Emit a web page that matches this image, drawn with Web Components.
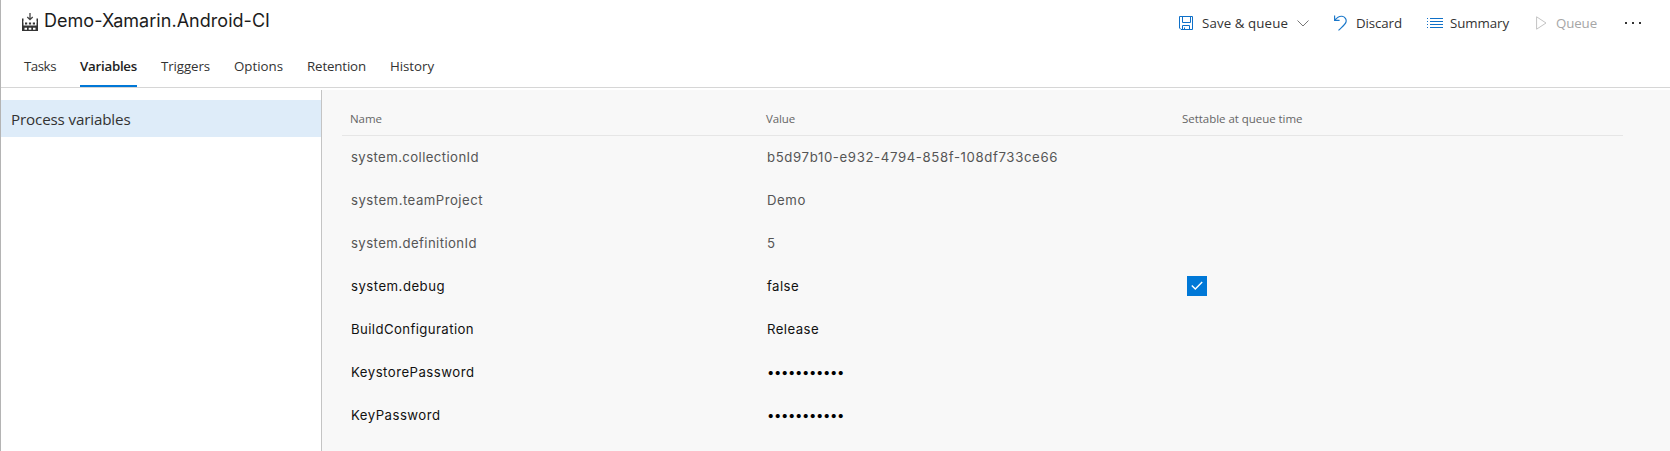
<!DOCTYPE html>
<html lang="en">
<head>
<meta charset="utf-8">
<title>Demo-Xamarin.Android-CI</title>
<style>
html,body{margin:0;height:100%;background:#fff;overflow:hidden}
body{font-family:"Open Sans","Noto Sans",sans-serif;color:#333}
</style>
</head>
<body>
<build-editor></build-editor>
<script>
const define=(name,html,setup)=>customElements.define(name,class extends HTMLElement{
  connectedCallback(){
    if(this.shadowRoot)return;
    this.attachShadow({mode:'open'}).innerHTML=html;
    if(setup)setup(this,this.shadowRoot);
  }
});

// Label whose tracking is adjusted so that it occupies the given width.
define('fit-text','<style>:host{display:block;white-space:pre;flex:none}span{display:inline-block}</style><span></span>',(el,root)=>{
  const span=root.querySelector('span'),t=el.getAttribute('text'),w=+el.getAttribute('w');
  span.textContent=t;
  el.style.width=w+'px';
  const n=span.getBoundingClientRect().width;
  span.style.letterSpacing=((w-n)/t.length).toFixed(3)+'px';
});

const icons={
  build:[16,18,'<path d="M8 0v6.5M5.3 4L8 6.7 10.700 4" fill="none" stroke="#444" stroke-width="1.3"/><path d="M0 5.500h1.500v4h13v-4H16V18H0z" fill="#333"/><path d="M1.500 8.300h13V13h-13z" fill="#fff"/><path d="M3 9.500h2.200v2H3zM6.900 9.500h2.200v2H6.900zM10.800 9.500H13v2h-2.200zM0 12.600h16v1.400H0z" fill="#333"/><path d="M2.500 14.800h2.500v2H2.500zM6.700 14.800h2.600v2H6.700zM11 14.800h2.500v2H11z" fill="#fff"/>'],
  save:[14,14,'<g fill="none" stroke="#0f70c8"><path d="M.5.500h13v13H2L.5 12z"/><path d="M3.500.500v6h8v-6M3.500 13.500v-4h7v4M5.500 13.500v-2"/></g>'],
  down:[12,7,'<path d="M.5.500L6 6 11.500.500" fill="none" stroke="#777"/>'],
  undo:[13,16,'<path d="M.6.500v4.900h5M.6 5.300C3 2.500 5.500 1 8 1.300c3 .4 4.700 3.200 4 5.700C11.300 9.500 8.500 11.500 4.500 15.400" fill="none" stroke="#1977ca" stroke-width="1.15"/>'],
  list:[16,10,'<path d="M0 .5h1M3 .5h13M0 3.500h1M3 3.500h13M0 6.500h1M3 6.500h13M0 9.500h1M3 9.500h13" stroke="#0f70c8"/>'],
  play:[11,14,'<path d="M.6.800v12.400L10 7z" fill="none" stroke="#c3c3c3"/>'],
  more:[17,2,'<path d="M0 0h2v2H0zM7 0h2v2H7zM14 0h2v2h-2z" fill="#333"/>'],
  check:[20,20,'<path fill="#0078d7" d="M0 0h20v20H0z"/><path d="M4.800 9.600L8.300 13l6.900-7" fill="none" stroke="#fff" stroke-width="1.400"/>']
};
define('ui-icon','<style>:host{display:block;flex:none}svg{display:block}</style><div></div>',(el,root)=>{
  const [w,h,p]=icons[el.getAttribute('name')];
  root.querySelector('div').innerHTML=`<svg width="${w}" height="${h}" viewBox="0 0 ${w} ${h}">${p}</svg>`;
});

define('page-title',`<style>
:host{display:flex;align-items:flex-start;color:#1c1c1c;font:18px/24px Inter,sans-serif}
ui-icon{margin:13px 6px 0 1px}fit-text{margin-top:9px}
</style><ui-icon name="build"></ui-icon><fit-text text="Demo-Xamarin.Android-CI" w="226"></fit-text>`);

define('tool-bar',`<style>
:host{display:flex;align-items:center;height:46px;font-size:13.300px;line-height:20px;color:#333}
div{display:flex;align-items:center}
.off{color:#a6a6a6}
</style>
<div style="gap:9px"><ui-icon name="save"></ui-icon><fit-text text="Save &amp; queue" w="86"></fit-text><ui-icon name="down"></ui-icon></div>
<div style="gap:9px;margin-left:25px"><ui-icon name="undo"></ui-icon><fit-text text="Discard" w="46"></fit-text></div>
<div style="gap:7px;margin-left:25px"><ui-icon name="list"></ui-icon><fit-text text="Summary" w="59"></fit-text></div>
<div class="off" style="gap:9px;margin-left:27px"><ui-icon name="play"></ui-icon><fit-text text="Queue" w="41"></fit-text></div>
<ui-icon name="more" style="margin-left:28px"></ui-icon>`);

define('tab-item',`<style>
:host{display:block;height:31px;font-size:13.300px;line-height:18px;color:#333}
:host([active]){height:28px;border-bottom:2px solid #0078d7;font-weight:600;color:#222}
</style><div></div>`,(el,root)=>{
  root.querySelector('div').innerHTML=`<fit-text text="${el.getAttribute('label')}" w="${el.getAttribute('w')}"></fit-text>`;
});

define('side-item',`<style>
:host{display:flex;align-items:center;height:37px;padding-left:10px;background:#deecf9;color:#333;font-size:15.200px}
</style><fit-text text="Process variables" w="119.500"></fit-text>`);

define('variable-row',`<style>
:host{display:grid;grid-template-columns:416px 416px 1fr;align-items:center;height:43px;padding-left:9px;font:13.200px/20px Inter,sans-serif;color:#111}
:host([readonly]){color:#555}
ui-icon{margin-left:4px}
.dots{color:#000}
</style>`,(el,root)=>{
  const a=n=>el.getAttribute(n);
  root.innerHTML+=`<fit-text text="${a('name')}" w="${a('nw')}"></fit-text><fit-text ${a('secret')!==null?'class="dots"':''} text="${a('value')}" w="${a('vw')}"></fit-text>${a('settable')!==null?'<ui-icon name="check"></ui-icon>':''}`;
});

define('variable-table',`<style>
:host{display:block;margin:10px 47px 0 20px}
header{display:grid;grid-template-columns:416px 416px 1fr;height:35px;margin-bottom:-1px;padding-left:8px;border-bottom:1px solid #e6e6e6;font-size:11.500px;line-height:37px;color:#666}
</style>
<header><fit-text text="Name" w="32"></fit-text><fit-text text="Value" w="29"></fit-text><fit-text text="Settable at queue time" w="120.500"></fit-text></header>
<variable-row readonly name="system.collectionId" nw="128" value="b5d97b10-e932-4794-858f-108df733ce66" vw="291"></variable-row>
<variable-row readonly name="system.teamProject" nw="132" value="Demo" vw="39"></variable-row>
<variable-row readonly name="system.definitionId" nw="126" value="5" vw="9"></variable-row>
<variable-row name="system.debug" nw="94" value="false" vw="32" settable></variable-row>
<variable-row name="BuildConfiguration" nw="123" value="Release" vw="52"></variable-row>
<variable-row name="KeystorePassword" nw="123.500" value="•••••••••••" vw="77" secret></variable-row>
<variable-row name="KeyPassword" nw="89.500" value="•••••••••••" vw="77" secret></variable-row>`);

define('build-editor',`<style>
:host{display:flex;flex-direction:column;box-sizing:border-box;height:451px;border-left:1px solid #b4b4b4}
.top{display:flex;justify-content:space-between;height:57px;padding:0 28px 0 20px}
nav{display:flex;gap:24px;height:30px;padding-left:23px;border-bottom:1px solid #d6d6d6}
main{display:flex;flex:1;padding-top:2px}
aside{width:320px;padding-top:10px}
section{flex:1;border-left:1px solid #c4c4c4;background:#f8f8f8}
</style>
<div class="top"><page-title></page-title><tool-bar></tool-bar></div>
<nav>
<tab-item label="Tasks" w="32"></tab-item><tab-item label="Variables" w="57" active></tab-item><tab-item label="Triggers" w="49"></tab-item><tab-item label="Options" w="49"></tab-item><tab-item label="Retention" w="59"></tab-item><tab-item label="History" w="44"></tab-item>
</nav>
<main><aside><side-item></side-item></aside><section><variable-table></variable-table></section></main>`);
</script>
</body>
</html>
